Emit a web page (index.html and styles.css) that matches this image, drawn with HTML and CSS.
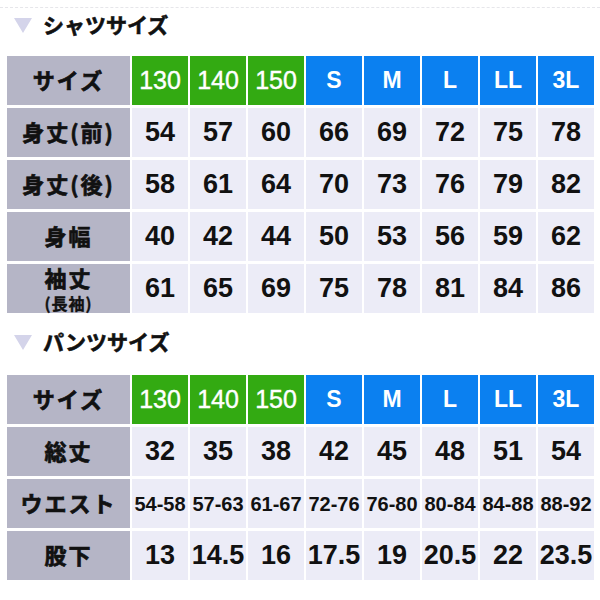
FILE: index.html
```html
<!DOCTYPE html>
<html lang="ja">
<head>
<meta charset="utf-8">
<title>サイズ表</title>
<link rel="stylesheet" href="styles.css">
</head>
<body>
<div class="page">
  <div class="sec-title first"><span class="tri"></span><span class="tt">シャツサイズ</span></div>
  <div class="grid grid-shirt">
    <div class="lab">サイズ</div>
    <div class="hd g">130</div><div class="hd g">140</div><div class="hd g">150</div>
    <div class="hd b">S</div><div class="hd b">M</div><div class="hd b">L</div><div class="hd b">LL</div><div class="hd b">3L</div>

    <div class="lab">身丈<span class="par">(</span>前<span class="par">)</span></div>
    <div class="v">54</div><div class="v">57</div><div class="v">60</div><div class="v">66</div><div class="v">69</div><div class="v">72</div><div class="v">75</div><div class="v">78</div>

    <div class="lab">身丈<span class="par">(</span>後<span class="par">)</span></div>
    <div class="v">58</div><div class="v">61</div><div class="v">64</div><div class="v">70</div><div class="v">73</div><div class="v">76</div><div class="v">79</div><div class="v">82</div>

    <div class="lab">身幅</div>
    <div class="v">40</div><div class="v">42</div><div class="v">44</div><div class="v">50</div><div class="v">53</div><div class="v">56</div><div class="v">59</div><div class="v">62</div>

    <div class="lab two"><span class="l1">袖丈</span><span class="l2">(長袖)</span></div>
    <div class="v">61</div><div class="v">65</div><div class="v">69</div><div class="v">75</div><div class="v">78</div><div class="v">81</div><div class="v">84</div><div class="v">86</div>
  </div>

  <div class="sec-title second"><span class="tri"></span><span class="tt">パンツサイズ</span></div>
  <div class="grid grid-pants">
    <div class="lab">サイズ</div>
    <div class="hd g">130</div><div class="hd g">140</div><div class="hd g">150</div>
    <div class="hd b">S</div><div class="hd b">M</div><div class="hd b">L</div><div class="hd b">LL</div><div class="hd b">3L</div>

    <div class="lab">総丈</div>
    <div class="v">32</div><div class="v">35</div><div class="v">38</div><div class="v">42</div><div class="v">45</div><div class="v">48</div><div class="v">51</div><div class="v">54</div>

    <div class="lab">ウエスト</div>
    <div class="v sm">54-58</div><div class="v sm">57-63</div><div class="v sm">61-67</div><div class="v sm">72-76</div><div class="v sm">76-80</div><div class="v sm">80-84</div><div class="v sm">84-88</div><div class="v sm">88-92</div>

    <div class="lab">股下</div>
    <div class="v">13</div><div class="v">14.5</div><div class="v">16</div><div class="v">17.5</div><div class="v">19</div><div class="v">20.5</div><div class="v">22</div><div class="v">23.5</div>
  </div>
</div>
</body>
</html>
```
FILE: styles.css
```css
html, body {
  margin: 0;
  padding: 0;
  background: #ffffff;
}
.page {
  margin-top: 7px;
  border-top: 1px dashed #e6e6ea;
  padding-left: 7px;
  width: 593px;
  font-family: "Noto Sans CJK JP", "Liberation Sans", sans-serif;
  color: #111111;
}
.sec-title {
  height: 34px;
  display: flex;
  align-items: center;
}
.sec-title.second {
  margin-top: 12px;
}
.tri {
  width: 0;
  height: 0;
  margin-left: 7px;
  border-left: 9px solid transparent;
  border-right: 9px solid transparent;
  border-top: 15px solid #d4d4ea;
}
.tt {
  margin-left: 11px;
  padding-bottom: 2px;
  font-size: 21px;
  font-weight: 700;
  line-height: 1;
  -webkit-text-stroke: 0.6px #111111;
  color: #111111;
}
.grid {
  display: grid;
  grid-template-columns: 123px repeat(8, 56px);
  grid-auto-rows: 49px;
  column-gap: 2px;
  row-gap: 3px;
}
.grid-shirt {
  margin-top: 14px;
}
.grid-pants {
  margin-top: 16px;
}
.lab {
  background: #b5b5c6;
  display: flex;
  align-items: center;
  justify-content: center;
  padding-bottom: 4px;
  font-size: 22px;
  font-weight: 700;
  line-height: 1;
  letter-spacing: 2px;
  -webkit-text-stroke: 0.7px #111111;
  color: #111111;
}
.lab.two {
  flex-direction: column;
  padding-bottom: 0;
}
.l1 {
  display: block;
  font-size: 22px;
  line-height: 22px;
  letter-spacing: 2px;
}
.l2 {
  display: block;
  font-size: 16px;
  line-height: 16px;
  letter-spacing: 1px;
  margin-top: 7px;
  -webkit-text-stroke: 0.4px #111111;
}
.hd {
  display: flex;
  align-items: center;
  justify-content: center;
  color: #ffffff;
  font-family: "Liberation Sans", sans-serif;
  font-size: 25px;
  line-height: 1;
  -webkit-text-stroke: 0.4px #ffffff;
}
.hd.g {
  background: #33aa12;
}
.hd.b {
  background: #0b80f0;
  font-weight: 700;
  font-size: 23px;
  -webkit-text-stroke: 0;
}
.v {
  background: #ececf7;
  display: flex;
  align-items: center;
  justify-content: center;
  font-family: "Liberation Sans", sans-serif;
  font-weight: 700;
  font-size: 27px;
  line-height: 1;
  color: #111111;
}
.v.sm {
  font-size: 20px;
  letter-spacing: 0;
}
```
